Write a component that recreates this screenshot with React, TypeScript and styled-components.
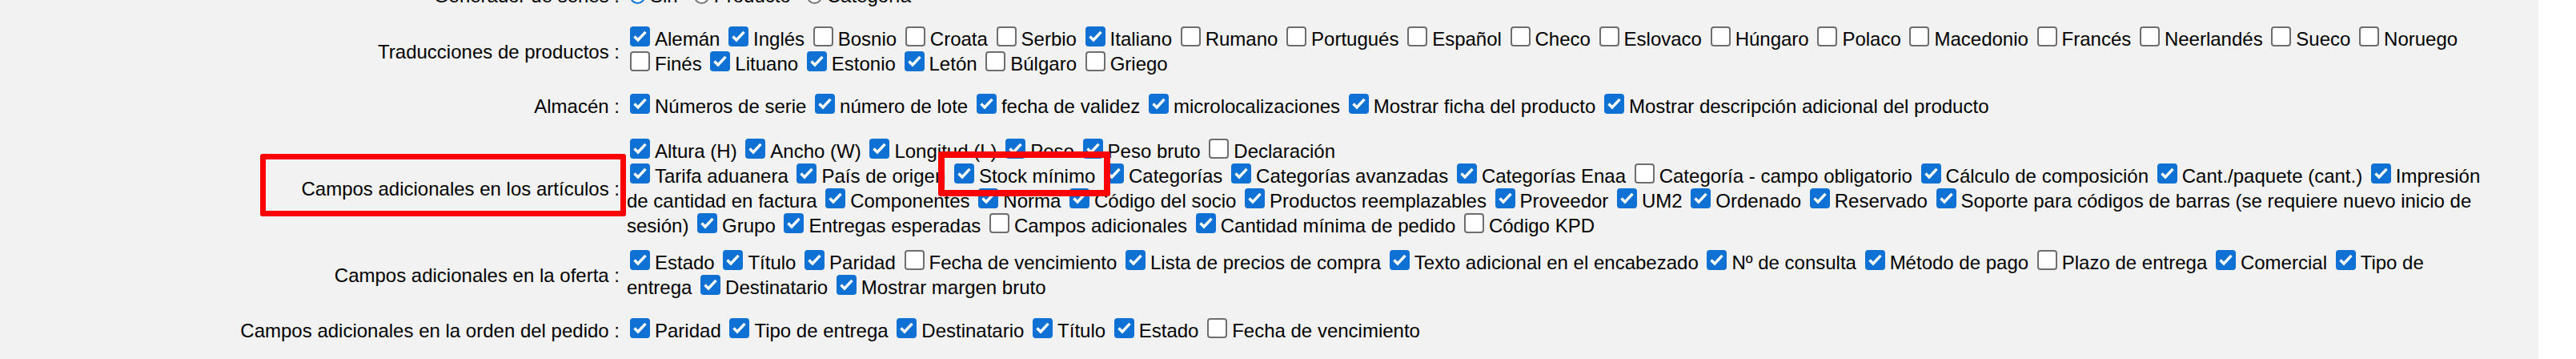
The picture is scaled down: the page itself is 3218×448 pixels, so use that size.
import React, { Fragment } from 'react';
import styled, { createGlobalStyle } from 'styled-components';

type Opt = { label: string; on: boolean; br?: boolean };

// "+" = marcado, "-" = sin marcar, "|" = salto de línea
const parse = (list: string[]): Opt[] =>
	list.map((s) =>
		s === '|' ? { label: '', on: false, br: true } : { label: s.slice(1), on: s[0] === '+' },
	);

const traducciones = parse([
	'+Alemán', '+Inglés', '-Bosnio', '-Croata', '-Serbio', '+Italiano', '-Rumano', '-Portugués',
	'-Español', '-Checo', '-Eslovaco', '-Húngaro', '-Polaco', '-Macedonio', '-Francés',
	'-Neerlandés', '-Sueco', '-Noruego', '-Finés', '+Lituano', '+Estonio', '+Letón', '-Búlgaro',
	'-Griego',
]);

const almacen = parse([
	'+Números de serie', '+número de lote', '+fecha de validez', '+microlocalizaciones',
	'+Mostrar ficha del producto', '+Mostrar descripción adicional del producto',
]);

const articulos = parse([
	'+Altura (H)', '+Ancho (W)', '+Longitud (L)', '+Peso', '+Peso bruto', '-Declaración', '|',
	'+Tarifa aduanera', '+País de origen', '+Stock mínimo', '+Categorías', '+Categorías avanzadas',
	'+Categorías Enaa', '-Categoría - campo obligatorio', '+Cálculo de composición',
	'+Cant./paquete (cant.)', '+Impresión de cantidad en factura', '+Componentes', '+Norma',
	'+Código del socio', '+Productos reemplazables', '+Proveedor', '+UM2', '+Ordenado',
	'+Reservado', '+Soporte para códigos de barras (se requiere nuevo inicio de sesión)', '+Grupo',
	'+Entregas esperadas', '-Campos adicionales', '+Cantidad mínima de pedido', '-Código KPD',
]);

const oferta = parse([
	'+Estado', '+Título', '+Paridad', '-Fecha de vencimiento', '+Lista de precios de compra',
	'+Texto adicional en el encabezado', '+Nº de consulta', '+Método de pago', '-Plazo de entrega',
	'+Comercial', '+Tipo de entrega', '+Destinatario', '+Mostrar margen bruto',
]);

const pedido = parse([
	'+Paridad', '+Tipo de entrega', '+Destinatario', '+Título', '+Estado', '-Fecha de vencimiento',
]);

const GlobalStyle = createGlobalStyle`
	html, body {
		margin: 0;
		padding: 0;
		background: #ffffff;
	}
	body {
		font-family: "Liberation Sans", Arial, sans-serif;
		font-size: 24px;
		color: #000000;
	}
`;

const Panel = styled.div`
	position: relative;
	width: 3171px;
	height: 448px;
	overflow: hidden;
	background: #f2f2f2;
`;

const Table = styled.div`
	display: flex;
	flex-direction: column;
	margin-top: -21.5px;
`;

const Row = styled.div<{ $gap: number }>`
	display: grid;
	grid-template-columns: 783px 2327px;
	align-items: center;
	padding-top: ${(p) => p.$gap}px;
`;

const Label = styled.div`
	text-align: right;
	padding-right: 9px;
	line-height: 31px;
	white-space: nowrap;
`;

const Values = styled.div`
	line-height: 31px;
`;

const Nowrap = styled.span`
	white-space: nowrap;
`;

const Box = styled.span<{ $on: boolean }>`
	display: inline-block;
	box-sizing: border-box;
	width: 25px;
	height: 25px;
	margin: 0 6px 0 4px;
	vertical-align: -1px;
	border-radius: 4px;
	background: ${(p) => (p.$on ? '#0f71d3' : '#ffffff')};
	border: ${(p) => (p.$on ? 'none' : '2px solid #6e6e6e')};

	svg {
		display: block;
	}
`;

const Radio = styled.span<{ $on: boolean }>`
	display: inline-block;
	box-sizing: border-box;
	width: 19px;
	height: 19px;
	margin: 0 6px 0 4px;
	vertical-align: -2px;
	border-radius: 50%;
	background: #ffffff;
	border: 2px solid ${(p) => (p.$on ? '#0f71d3' : '#767676')};
	box-shadow: ${(p) => (p.$on ? 'inset 0 0 0 3px #ffffff, inset 0 0 0 10px #0f71d3' : 'none')};
`;

const RadioItem = styled.span`
	margin-right: 16px;
	white-space: nowrap;
`;

const Mark = styled.div<{ $x: number; $y: number; $w: number; $h: number; $b: number }>`
	position: absolute;
	left: ${(p) => p.$x}px;
	top: ${(p) => p.$y}px;
	width: ${(p) => p.$w}px;
	height: ${(p) => p.$h}px;
	box-sizing: border-box;
	border: ${(p) => p.$b}px solid #ff0000;
	border-radius: 3px;
	pointer-events: none;
`;

const Tick = () => (
	<svg width="25" height="25" viewBox="0 0 25 25">
		<polyline
			points="5.5,12.5 10,17 19.5,6.8"
			fill="none"
			stroke="#ffffff"
			strokeWidth="3.4"
		/>
	</svg>
);

const Check = ({ label, on }: Opt) => {
	const i = label.indexOf(' ');
	const first = i < 0 ? label : label.slice(0, i);
	const rest = i < 0 ? '' : label.slice(i);
	return (
		<>
			<Nowrap>
				<Box $on={on}>{on && <Tick />}</Box>
				{first}
			</Nowrap>
			{rest}
		</>
	);
};

const CheckList = ({ items }: { items: Opt[] }) => (
	<Values>
		{items.map((it, i) =>
			it.br ? (
				<br key={i} />
			) : (
				<Fragment key={i}>
					{i > 0 && !items[i - 1].br && ' '}
					<Check {...it} />
				</Fragment>
			),
		)}
	</Values>
);

export default function App() {
	return (
		<>
			<GlobalStyle />
			<Panel>
				<Table>
					<Row $gap={0}>
						<Label>Generador de series :</Label>
						<Values>
							<RadioItem>
								<Radio $on={true} />
								Sin
							</RadioItem>
							<RadioItem>
								<Radio $on={false} />
								Producto
							</RadioItem>
							<RadioItem>
								<Radio $on={false} />
								Categoría
							</RadioItem>
						</Values>
					</Row>
					<Row $gap={23.5}>
						<Label>Traducciones de productos :</Label>
						<CheckList items={traducciones} />
					</Row>
					<Row $gap={22}>
						<Label>Almacén :</Label>
						<CheckList items={almacen} />
					</Row>
					<Row $gap={25}>
						<Label>Campos adicionales en los artículos :</Label>
						<CheckList items={articulos} />
					</Row>
					<Row $gap={15}>
						<Label>Campos adicionales en la oferta :</Label>
						<CheckList items={oferta} />
					</Row>
					<Row $gap={23}>
						<Label>Campos adicionales en la orden del pedido :</Label>
						<CheckList items={pedido} />
					</Row>
				</Table>
				<Mark $x={325} $y={192} $w={457} $h={78} $b={7} />
				<Mark $x={1172} $y={189} $w={215} $h={56} $b={8} />
			</Panel>
		</>
	);
}
